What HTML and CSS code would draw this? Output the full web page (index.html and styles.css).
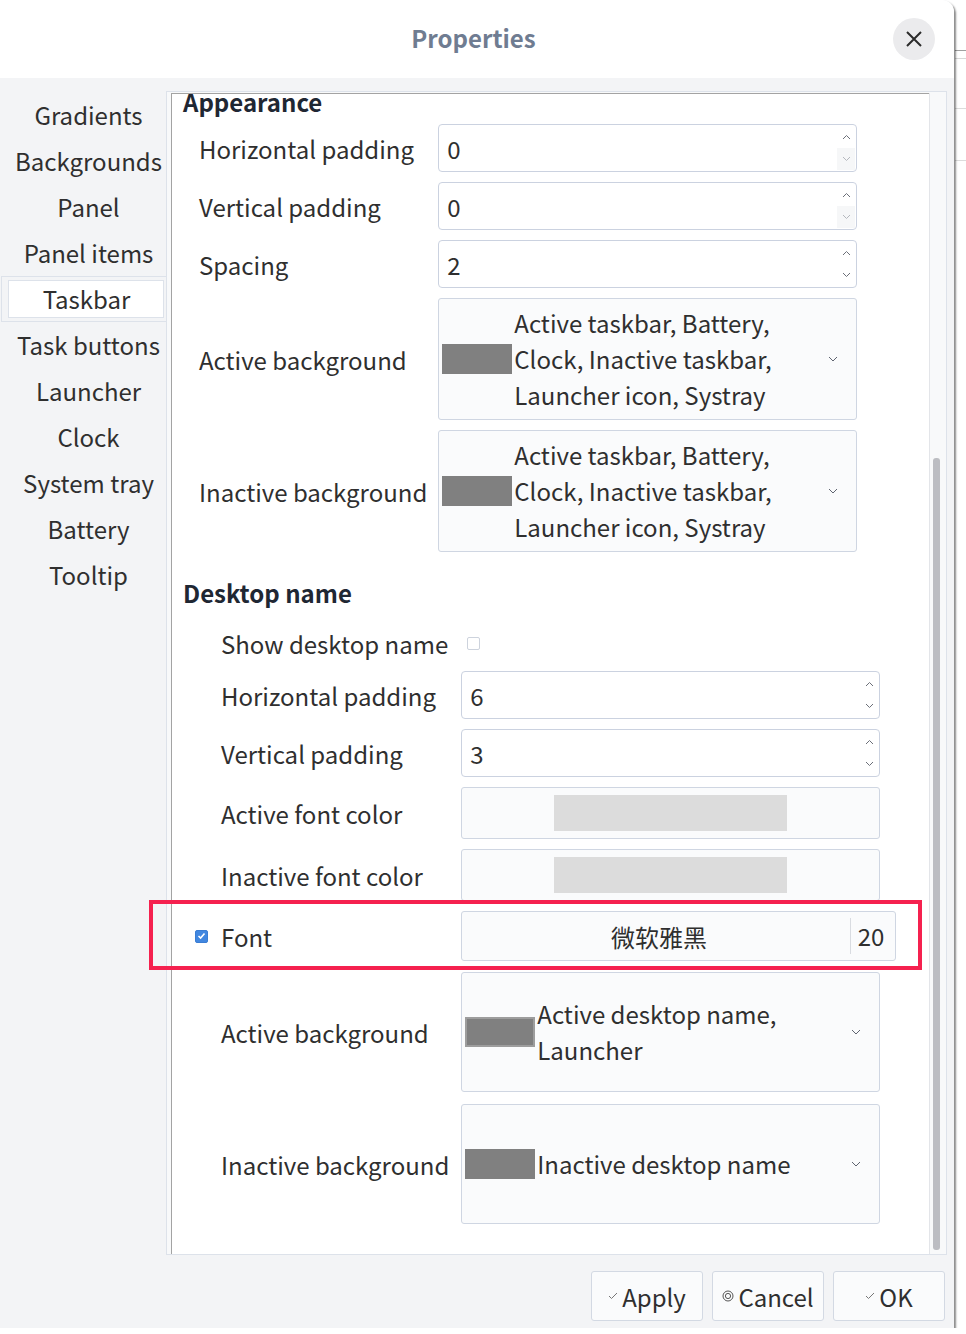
FILE: index.html
```html
<!DOCTYPE html>
<html lang="en">
<head>
  <meta charset="UTF-8">
  <title>Properties</title>
  <link rel="stylesheet" href="styles.css">
</head>
<body>
  <div class="window">
    <header class="titlebar">
      <span></span>
      <h1 class="title">Properties</h1>
      <button class="close" aria-label="Close">
        <svg width="18" height="18" viewBox="0 0 18 18"><path d="M2 2 L16 16 M16 2 L2 16" stroke="#2b2b2b" stroke-width="2" fill="none"/></svg>
      </button>
    </header>

    <div class="body">
      <div class="main">
        <nav class="sidebar">
          <div class="nav-item">Gradients</div>
          <div class="nav-item">Backgrounds</div>
          <div class="nav-item">Panel</div>
          <div class="nav-item">Panel items</div>
          <div class="nav-item active"><span>Taskbar</span></div>
          <div class="nav-item">Task buttons</div>
          <div class="nav-item">Launcher</div>
          <div class="nav-item">Clock</div>
          <div class="nav-item">System tray</div>
          <div class="nav-item">Battery</div>
          <div class="nav-item">Tooltip</div>
        </nav>

        <section class="panel">
          <div class="frame">
            <div class="content">
              <h2 class="section-title first">Appearance</h2>
              <div class="form">
                <label>Horizontal padding</label>
                <div class="spin">
                  <span class="spin-value">0</span>
                  <span class="spin-arrows">
                    <span class="arr"><svg width="9" height="6" viewBox="0 0 9 6"><path d="M1 5 L4.5 1.5 L8 5" stroke="#6b6f78" fill="none"/></svg></span>
                    <span class="arr off"><svg width="9" height="6" viewBox="0 0 9 6"><path d="M1 1 L4.5 4.5 L8 1" stroke="#b5b8be" fill="none"/></svg></span>
                  </span>
                </div>

                <label>Vertical padding</label>
                <div class="spin">
                  <span class="spin-value">0</span>
                  <span class="spin-arrows">
                    <span class="arr"><svg width="9" height="6" viewBox="0 0 9 6"><path d="M1 5 L4.5 1.5 L8 5" stroke="#6b6f78" fill="none"/></svg></span>
                    <span class="arr off"><svg width="9" height="6" viewBox="0 0 9 6"><path d="M1 1 L4.5 4.5 L8 1" stroke="#b5b8be" fill="none"/></svg></span>
                  </span>
                </div>

                <label>Spacing</label>
                <div class="spin">
                  <span class="spin-value">2</span>
                  <span class="spin-arrows">
                    <span class="arr"><svg width="9" height="6" viewBox="0 0 9 6"><path d="M1 5 L4.5 1.5 L8 5" stroke="#6b6f78" fill="none"/></svg></span>
                    <span class="arr"><svg width="9" height="6" viewBox="0 0 9 6"><path d="M1 1 L4.5 4.5 L8 1" stroke="#6b6f78" fill="none"/></svg></span>
                  </span>
                </div>

                <label>Active background</label>
                <div class="combo tall">
                  <span class="swatch"></span>
                  <span class="combo-text">Active taskbar, Battery,<br>Clock, Inactive taskbar,<br>Launcher icon, Systray</span>
                  <svg class="chev" width="10" height="6" viewBox="0 0 10 6"><path d="M1 1 L5 5 L9 1" stroke="#5f6470" fill="none"/></svg>
                </div>

                <label>Inactive background</label>
                <div class="combo tall">
                  <span class="swatch"></span>
                  <span class="combo-text">Active taskbar, Battery,<br>Clock, Inactive taskbar,<br>Launcher icon, Systray</span>
                  <svg class="chev" width="10" height="6" viewBox="0 0 10 6"><path d="M1 1 L5 5 L9 1" stroke="#5f6470" fill="none"/></svg>
                </div>
              </div>

              <h2 class="section-title">Desktop name</h2>
              <div class="form sub">
                <label>Show desktop name</label>
                <div class="check-cell"><span class="checkbox"></span></div>

                <label>Horizontal padding</label>
                <div class="spin">
                  <span class="spin-value">6</span>
                  <span class="spin-arrows">
                    <span class="arr"><svg width="9" height="6" viewBox="0 0 9 6"><path d="M1 5 L4.5 1.5 L8 5" stroke="#6b6f78" fill="none"/></svg></span>
                    <span class="arr"><svg width="9" height="6" viewBox="0 0 9 6"><path d="M1 1 L4.5 4.5 L8 1" stroke="#6b6f78" fill="none"/></svg></span>
                  </span>
                </div>

                <label>Vertical padding</label>
                <div class="spin">
                  <span class="spin-value">3</span>
                  <span class="spin-arrows">
                    <span class="arr"><svg width="9" height="6" viewBox="0 0 9 6"><path d="M1 5 L4.5 1.5 L8 5" stroke="#6b6f78" fill="none"/></svg></span>
                    <span class="arr"><svg width="9" height="6" viewBox="0 0 9 6"><path d="M1 1 L4.5 4.5 L8 1" stroke="#6b6f78" fill="none"/></svg></span>
                  </span>
                </div>

                <label>Active font color</label>
                <div class="color-btn"><span></span></div>

                <label>Inactive font color</label>
                <div class="color-btn"><span></span></div>

                <label class="with-check"><span class="checkbox checked"><svg width="9" height="8" viewBox="0 0 9 8"><path d="M1.5 4 L3.6 6 L7.5 1.5" stroke="#fff" stroke-width="1.6" fill="none"/></svg></span>Font</label>
                <div class="font-btn">
                  <span class="font-name">微软雅黑</span>
                  <span class="font-size">20</span>
                  <span class="highlight"></span>
                </div>

                <label>Active background</label>
                <div class="combo">
                  <span class="swatch framed"></span>
                  <span class="combo-text">Active desktop name,<br>Launcher</span>
                  <svg class="chev" width="10" height="6" viewBox="0 0 10 6"><path d="M1 1 L5 5 L9 1" stroke="#5f6470" fill="none"/></svg>
                </div>

                <label>Inactive background</label>
                <div class="combo">
                  <span class="swatch"></span>
                  <span class="combo-text">Inactive desktop name</span>
                  <svg class="chev" width="10" height="6" viewBox="0 0 10 6"><path d="M1 1 L5 5 L9 1" stroke="#5f6470" fill="none"/></svg>
                </div>
              </div>
            </div>
          </div>
          <div class="scrollbar"><div class="thumb"></div></div>
        </section>
      </div>

      <footer class="actions">
        <button class="btn">
          <svg width="10" height="8" viewBox="0 0 10 8"><path d="M1 4 L3.5 6.5 L9 1" stroke="#777" fill="none"/></svg>Apply
        </button>
        <button class="btn">
          <svg width="12" height="12" viewBox="0 0 12 12"><circle cx="6" cy="6" r="5" stroke="#555" fill="none"/><circle cx="6" cy="6" r="2.6" stroke="#555" fill="none"/></svg>Cancel
        </button>
        <button class="btn">
          <svg width="10" height="8" viewBox="0 0 10 8"><path d="M1 4 L3.5 6.5 L9 1" stroke="#777" fill="none"/></svg>OK
        </button>
      </footer>
    </div>
  </div>
</body>
</html>
```

FILE: styles.css
```css
* { margin: 0; padding: 0; box-sizing: border-box; }
body {
  font-family: "Noto Sans CJK SC", "Noto Sans", sans-serif;
  font-size: 24px;
  color: #2f2f2f;
  overflow: hidden;
  background:
    linear-gradient(#a0a0a0, #a0a0a0) no-repeat 955px 50px / 11px 1px,
    linear-gradient(#d8d8d8, #d8d8d8) no-repeat 955px 58px / 11px 1px,
    linear-gradient(#dcdcdc, #dcdcdc) no-repeat 955px 108px / 11px 1px,
    linear-gradient(#dcdcdc, #dcdcdc) no-repeat 955px 160px / 11px 1px,
    #fff;
}
.window {
  width: 954px;
  height: 1328px;
  background: #f3f4f6;
  border-top-right-radius: 12px;
  box-shadow: 2px 2px 2px rgba(0,0,0,0.45);
  overflow: hidden;
  display: flex;
  flex-direction: column;
}
.titlebar {
  height: 78px;
  background: #fff;
  display: grid;
  grid-template-columns: 1fr auto 1fr;
  align-items: center;
}
.title {
  font-size: 24px;
  font-weight: bold;
  color: #6f7c91;
  margin: 0 7px 3px 0;
}
.close {
  justify-self: end;
  margin-right: 19px;
  width: 42px;
  height: 42px;
  border: none;
  border-radius: 50%;
  background: #ebebed;
  display: grid;
  place-items: center;
}
.body {
  flex: 1;
  display: flex;
  flex-direction: column;
}
.main {
  flex: 1;
  display: flex;
  padding-top: 13px;
  min-height: 0;
}
.sidebar {
  width: 166px;
  padding: 1px 0 0 11px;
  flex-shrink: 0;
}
.nav-item {
  height: 46px;
  line-height: 46px;
  text-align: center;
  white-space: nowrap;
}
.nav-item.active {
  margin-left: -10px;
  border: 1px solid #dde2ea;
  border-right: none;
  padding: 3px 2px 3px 6px;
  line-height: 36px;
}
.nav-item.active span {
  display: block;
  height: 38px;
  background: #fff;
  border: 1px solid #dde2ea;
  padding-left: 1px;
}
.panel {
  flex: 1;
  margin: 0 7px 0 0;
  border: 1px solid #dde2ea;
  background: #f8f9fa;
  padding: 1px 0 0 4px;
  display: flex;
}
.frame {
  flex: 1;
  background: #fff;
  border-left: 1px solid #a3a3a3;
  border-top: 1px solid #a3a3a3;
  clip-path: inset(0 -40px -40px -40px);
}
.content {
  padding-left: 11px;
}
.section-title {
  font-size: 24px;
  font-weight: bold;
  color: #1f2733;
  line-height: 36px;
  margin-top: 23px;
}
.section-title.first { margin-top: -10px; }
.form {
  display: grid;
  grid-template-columns: max-content 419px;
  column-gap: 11px;
  row-gap: 10px;
  align-items: center;
  margin: 4px 0 0 16px;
}
.form.sub {
  column-gap: 12px;
  margin: 14px 0 0 38px;
}
.form label {
  white-space: nowrap;
}
.with-check {
  display: flex;
  align-items: center;
}
.checkbox {
  display: inline-grid;
  place-items: center;
  width: 13px;
  height: 13px;
  border: 1px solid #cdd3dd;
  border-radius: 2px;
  background: #fff;
}
.checkbox.checked {
  background: #4187e0;
  border-color: #3a7dd3;
  margin: 0 13px 0 -26px;
}
.check-cell {
  height: 36px;
  display: flex;
  align-items: center;
  padding-left: 6px;
}
.spin {
  height: 48px;
  display: flex;
  align-items: center;
  border: 1px solid #cbd2e0;
  border-radius: 4px;
  background: #fff;
  padding-left: 8px;
}
.spin-value { flex: 1; }
.spin-arrows {
  align-self: stretch;
  width: 18px;
  margin: 1px 1px 1px 0;
  display: grid;
  grid-template-rows: 1fr 1fr;
}
.arr {
  display: grid;
  place-items: center;
}
.arr.off { background: #f6f7f8; }
.combo {
  height: 120px;
  display: flex;
  align-items: center;
  border: 1px solid #cfd6e2;
  border-radius: 3px;
  background: #fafbfc;
  padding: 0 18px 0 3px;
  margin: 1px 0;
}
.combo.tall { height: 122px; margin: 0; }
.swatch {
  width: 70px;
  height: 30px;
  background: #808080;
  margin-right: 2px;
  flex-shrink: 0;
}
.swatch.framed { border: 2px solid #9d9d9d; }
.combo-text {
  flex: 1;
  line-height: 36px;
}
.color-btn {
  height: 52px;
  display: grid;
  place-items: center;
  border: 1px solid #cfd6e2;
  border-radius: 3px;
  background: #fafbfc;
}
.color-btn span {
  width: 233px;
  height: 36px;
  background: #dcdcdc;
}
.font-btn {
  position: relative;
  width: 435px;
  height: 50px;
  display: flex;
  align-items: center;
  border: 1px solid #cfd6e2;
  border-radius: 3px;
  background: #fafbfc;
}
.font-name {
  flex: 1;
  text-align: center;
  padding-left: 6px;
}
.font-size {
  border-left: 1px solid #d9dce1;
  line-height: 36px;
  padding: 0 11px 0 7px;
}
.highlight {
  position: absolute;
  left: -313px;
  top: -12px;
  width: 773px;
  height: 70px;
  border: 4px solid #f5214f;
  pointer-events: none;
}
.scrollbar {
  width: 17px;
  border-left: 1px solid #e3e5e9;
  padding: 365px 0 0 3px;
}
.thumb {
  width: 7px;
  height: 792px;
  border-radius: 3px;
  background: #bcbdc2;
}
.actions {
  height: 73px;
  display: flex;
  justify-content: flex-end;
  gap: 9px;
  padding: 16px 9px 0 0;
}
.btn {
  width: 112px;
  height: 50px;
  display: flex;
  align-items: center;
  justify-content: center;
  gap: 4px;
  border: 1px solid #d3d9e3;
  border-radius: 3px;
  background: #fafbfc;
  font-family: inherit;
  font-size: 24px;
  color: #2f2f2f;
}
```
